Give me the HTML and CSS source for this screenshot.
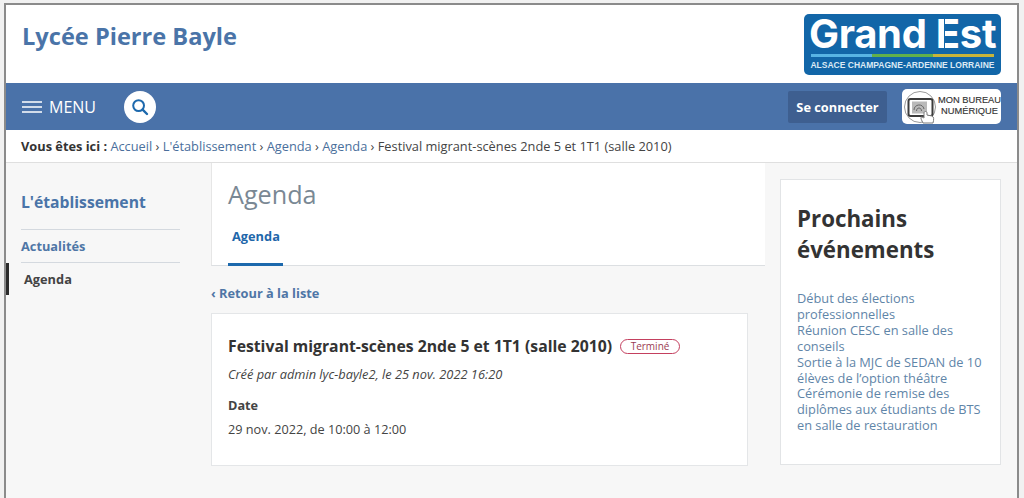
FILE: index.html
```html
<!DOCTYPE html>
<html lang="fr">
<head>
<meta charset="utf-8">
<title>Lycée Pierre Bayle</title>
<link rel="stylesheet" href="styles.css">
</head>
<body>
<div class="frame">
  <header class="top">
    <a class="site-name">Lycée Pierre Bayle</a>
    <div class="logo">
      <div class="logo-main">Grand <span class="logo-est">Est</span></div>
      <div class="logo-rule"><i class="r1"></i><i class="r2"></i><i class="r3"></i></div>
      <div class="logo-sub">ALSACE CHAMPAGNE-ARDENNE LORRAINE</div>
    </div>
  </header>
  <nav class="nav">
    <a class="menu">
      <svg class="burger" width="20" height="12" viewBox="0 0 20 12"><path d="M0 1h20M0 6h20M0 11h20" stroke="#fff" stroke-width="1.6"/></svg>
      <span>MENU</span>
    </a>
    <a class="search">
      <svg width="18" height="18" viewBox="0 0 18 18"><circle cx="7.6" cy="7.6" r="5.4" fill="none" stroke="#1d69ad" stroke-width="2"/><path d="M11.6 11.6L16 16" stroke="#1d69ad" stroke-width="2.4" stroke-linecap="round"/></svg>
    </a>
    <div class="nav-right">
      <a class="login">Se connecter</a>
      <a class="mbn">
        <svg class="mbn-icon" width="34" height="34" viewBox="0 0 34 34">
          <circle cx="17" cy="17" r="15.500" fill="#fff" stroke="#9a9a9a" stroke-width="1"/>
          <rect x="5.5" y="9" width="24" height="17" rx="2" fill="#fff" stroke="#3c3c3c" stroke-width="2"/>
          <rect x="9" y="11.5" width="15" height="12" fill="#b9b9b9"/>
          <path d="M11 20c0-6 9-7 10-1M13.500 21c0-4 5-4 5 0" fill="none" stroke="#666" stroke-width="1"/>
          <path d="M20 33c-2-4-3-6-1-6l2 1v-5c0-2 3-2 3 0v2l5 1c2 1 2 3 1 7z" fill="#fff" stroke="#7a7a7a" stroke-width="1"/>
        </svg>
        <span class="mbn-text">MON BUREAU<br>NUMÉRIQUE</span>
      </a>
    </div>
  </nav>
  <div class="crumbs">
    <strong>Vous êtes ici :</strong>
    <a>Accueil</a> <span class="sep">›</span> <a>L'établissement</a> <span class="sep">›</span> <a>Agenda</a> <span class="sep">›</span> <a>Agenda</a> <span class="sep">›</span> <span class="cur">Festival migrant-scènes 2nde 5 et 1T1 (salle 2010)</span>
  </div>
  <div class="body">
    <aside class="side">
      <h2 class="side-title">L'établissement</h2>
      <a class="side-link">Actualités</a>
      <a class="side-active">Agenda</a>
    </aside>
    <main class="main">
      <div class="page-head">
        <h1 class="page-title">Agenda</h1>
        <div class="tabs"><a class="tab">Agenda</a></div>
      </div>
      <a class="back">‹ Retour à la liste</a>
      <article class="card">
        <div class="event-head">
          <h2 class="event-title">Festival migrant-scènes 2nde 5 et 1T1 (salle 2010)</h2>
          <span class="badge">Terminé</span>
        </div>
        <p class="author">Créé par admin lyc-bayle2, le 25 nov. 2022 16:20</p>
        <h3 class="date-label">Date</h3>
        <p class="date">29 nov. 2022, de 10:00 à 12:00</p>
      </article>
    </main>
    <section class="events">
      <div class="events-card">
        <h2 class="events-title">Prochains événements</h2>
        <ul class="events-list">
          <li>Début des élections professionnelles</li>
          <li>Réunion CESC en salle des conseils</li>
          <li>Sortie à la MJC de SEDAN de 10 élèves de l’option théâtre</li>
          <li>Cérémonie de remise des diplômes aux étudiants de BTS en salle de restauration</li>
        </ul>
      </div>
    </section>
  </div>
</div>
</body>
</html>
```
FILE: styles.css
```css
* { box-sizing: border-box; }
html, body { margin: 0; height: 100%; overflow: hidden; }
body { background: #f1f1f1; font-family: "Open Sans", sans-serif; color: #333; padding: 3px 5px 0 4px; }
a { color: inherit; text-decoration: none; }
h1, h2, h3, p, ul { margin: 0; padding: 0; }
.frame { height: 495px; border: solid #8b8b8b; border-width: 2px 2px 0 2px; background: #f7f7f7; display: flex; flex-direction: column; overflow: hidden; }

.top { height: 78px; background: #fff; display: flex; justify-content: space-between; padding: 0 16px 0 16px; flex: none; }
.site-name { font-size: 23.6px; font-weight: 700; color: #4a74a8; line-height: 32px; margin-top: 15px; }
.logo { width: 197px; height: 61px; margin-top: 9px; background: #1266a8; border-radius: 5px; color: #fff; padding: 0 5px; }
.logo-main { font-family: Inter, sans-serif; font-weight: 700; font-size: 40px; line-height: 40px; height: 40px; letter-spacing: -0.3px; white-space: nowrap; text-align: center; }
.logo-est { position: relative; }
.logo-est::before { content: ""; position: absolute; left: 8px; top: 6px; bottom: 6px; width: 1.5px; background: #1266a8; }
.logo-rule { display: flex; height: 3px; margin: 0 2px; }
.logo-rule i { flex: 1; }
.r1 { background: #58b4e4; }
.r2 { background: #62b04a; }
.r3 { background: #c9b43a; }
.logo-sub { font-family: "Liberation Sans", sans-serif; font-weight: 700; font-size: 8.5px; line-height: 17px; white-space: nowrap; text-align: center; color: #dbe9f4; }

.nav { height: 47px; background: #4a72a9; display: flex; align-items: center; padding: 0 16px; color: #fff; flex: none; }
.menu { display: flex; align-items: center; gap: 7px; font-size: 16px; width: 102px; }
.search { width: 32px; height: 32px; border-radius: 50%; background: #fff; display: flex; align-items: center; justify-content: center; }
.nav-right { margin-left: auto; display: flex; align-items: center; gap: 15px; }
.login { width: 99px; height: 32px; background: #3e5f90; border-radius: 2px; font-size: 12.8px; font-weight: 700; line-height: 32px; text-align: center; }
.mbn { width: 99px; height: 35px; background: #fff; border-radius: 5px; display: flex; align-items: center; color: #333; padding-left: 1px; }
.mbn-icon { flex: none; }
.mbn-text { font-family: "Liberation Sans", sans-serif; font-size: 9.3px; line-height: 11px; text-align: center; white-space: nowrap; margin: -2px 0 0 1px; -webkit-text-stroke: 0.15px #333; }

.crumbs { height: 33px; background: #fff; border-bottom: 1px solid #dfdfdf; padding: 0 15px; font-size: 12.8px; line-height: 33px; color: #4a6f9c; white-space: nowrap; flex: none; }
.crumbs strong { color: #333; }
.crumbs .sep, .crumbs .cur { color: #444; }

.body { display: flex; flex: 1; min-height: 0; }
.side { width: 205px; flex: none; padding: 0 31px 0 15px; position: relative; }
.side-title { font-size: 15.7px; font-weight: 700; color: #4a74a8; line-height: 22px; margin-top: 28px; padding-bottom: 16px; border-bottom: 1px solid #d4d9df; }
.side-link { display: block; font-size: 12.8px; font-weight: 700; color: #4f76a6; line-height: 32px; border-bottom: 1px solid #d4d9df; }
.side-active { display: block; font-size: 12.8px; font-weight: 700; color: #444; line-height: 32px; margin-left: 3px; }
.side-active::before { content: ""; position: absolute; left: 0; top: 100px; width: 3px; height: 32px; background: #2b2b2b; }

.main { width: 554px; flex: none; }
.page-head { background: #fff; height: 103px; border-left: 1px solid #e6e6e6; border-bottom: 1px solid #dcdfe2; padding: 0 16px; }
.page-title { font-size: 25.2px; font-weight: 400; color: #7a8894; line-height: 36px; padding-top: 13px; height: 49px; }
.tabs { margin-top: 9px; }
.tab { display: inline-block; width: 55px; height: 45px; padding-left: 4px; font-size: 12.8px; font-weight: 700; color: #1f67aa; line-height: 30px; border-bottom: 3px solid #1d69ad; }
.back { display: block; font-size: 12.8px; font-weight: 700; color: #4f76a6; line-height: 18px; margin-top: 18px; }
.card { width: 537px; height: 153px; margin-top: 11px; background: #fff; border: 1px solid #e4e6e8; padding: 19px 16px; }
.event-head { display: flex; align-items: center; gap: 8px; }
.event-title { font-size: 15.75px; font-weight: 700; color: #333; line-height: 26px; white-space: nowrap; }
.badge { width: 60px; height: 15px; border: 1px solid #c4405f; border-radius: 8px; font-size: 10px; line-height: 13px; text-align: center; color: #9a3b52; margin-top: 1px; }
.author { font-size: 12.8px; font-style: italic; color: #444; line-height: 18px; margin-top: 6px; }
.date-label { font-size: 12.7px; font-weight: 700; color: #444; line-height: 18px; margin-top: 13px; }
.date { font-size: 12.7px; color: #444; line-height: 18px; margin-top: 6px; }

.events { flex: 1; padding: 16px 16px 0 15px; }
.events-card { width: 221px; height: 286px; background: #fff; border: 1px solid #e2e4e6; padding: 23px 16px; }
.events-title { font-size: 22.3px; font-weight: 700; color: #333; line-height: 31px; }
.events-list { list-style: none; margin-top: 26px; font-size: 12.8px; line-height: 15.9px; color: #5f85a8; }
```
